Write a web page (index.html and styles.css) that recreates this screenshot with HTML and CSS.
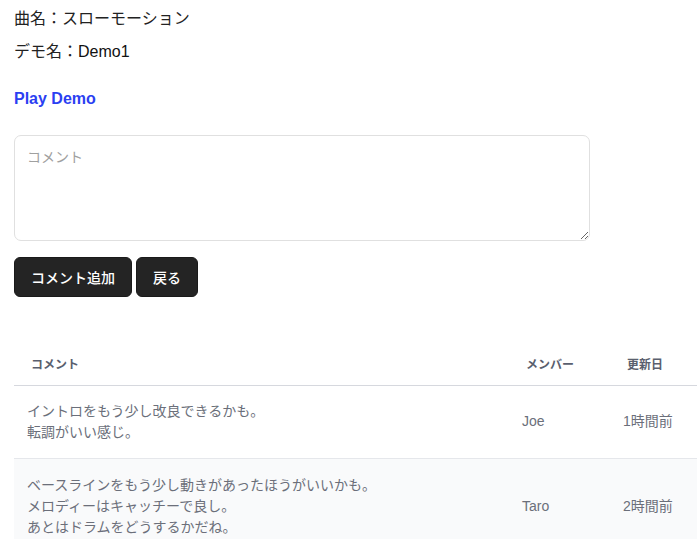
FILE: index.html
```html
<!DOCTYPE html>
<html lang="ja">
<head>
<meta charset="utf-8">
<link rel="stylesheet" href="styles.css">
</head>
<body>
<div class="page">
  <p class="info">曲名：スローモーション</p>
  <p class="info">デモ名：<span class="strong">Demo1</span></p>
  <a class="play" href="#">Play Demo</a>
  <textarea class="comment-box" placeholder="コメント"></textarea>
  <div class="actions">
    <button class="btn">コメント追加</button>
    <button class="btn">戻る</button>
  </div>
  <table class="comments">
    <thead>
      <tr>
        <th class="c-comment">コメント</th>
        <th class="c-member">メンバー</th>
        <th class="c-date">更新日</th>
      </tr>
    </thead>
    <tbody>
      <tr>
        <td>イントロをもう少し改良できるかも。<br>転調がいい感じ。</td>
        <td>Joe</td>
        <td>1時間前</td>
      </tr>
      <tr class="alt">
        <td>ベースラインをもう少し動きがあったほうがいいかも。<br>メロディーはキャッチーで良し。<br>あとはドラムをどうするかだね。</td>
        <td>Taro</td>
        <td>2時間前</td>
      </tr>
    </tbody>
  </table>
</div>
</body>
</html>
```

FILE: styles.css
```css
* { box-sizing: border-box; }
html, body { margin: 0; padding: 0; background: #fff; }
body {
  font-family: "Liberation Sans", "Noto Sans CJK JP", sans-serif;
  color: #222;
  overflow: hidden;
}
.page {
  padding: 7px 0 0 14px;
  display: flex;
  flex-direction: column;
  align-items: flex-start;
}
.info {
  margin: 0 0 9px 0;
  font-size: 16px;
  line-height: 24px;
}
.strong { color: #111; }
.play {
  margin-top: 16px;
  font-size: 16px;
  font-weight: bold;
  color: #2b3ff2;
  text-decoration: none;
  line-height: 20px;
}
.comment-box {
  margin-top: 26px;
  width: 576px;
  height: 106px;
  border: 1px solid #e0e0e0;
  border-radius: 7px;
  padding: 10px 12px;
  font-family: inherit;
  font-size: 14px;
  color: #222;
  resize: vertical;
  outline: none;
}
.comment-box::placeholder { color: #a0a0a0; }
.actions {
  margin-top: 16px;
  display: flex;
  gap: 4px;
}
.btn {
  height: 40px;
  padding: 0 16px;
  background: #242424;
  color: #fff;
  border: 1px solid #1a1a1a;
  border-radius: 6px;
  font-family: inherit;
  font-size: 14px;
  font-weight: 500;
}
.btn:first-child { width: 118px; }
.btn:last-child { width: 62px; }
.comments {
  margin-top: 45px;
  width: 683px;
  border-collapse: collapse;
  table-layout: fixed;
}
.comments th {
  font-size: 12px;
  font-weight: bold;
  color: #5a5f6e;
  text-align: left;
  padding: 0 0 0 17px;
  height: 43px;
  border-bottom: 1px solid #d6d8de;
}
.c-comment { width: 495px; }
.c-member { width: 104px; }
.c-date { width: 84px; padding-left: 14px !important; }
.comments td {
  font-size: 14px;
  line-height: 21px;
  color: #6b6f7a;
  padding: 15px 0 15px 13px;
  border-bottom: 1px solid #e5e7eb;
  vertical-align: middle;
}
.comments td:last-child { padding-left: 10px; }
.comments tr.alt td { background: #f9fafb; padding-top: 16px; }
```
